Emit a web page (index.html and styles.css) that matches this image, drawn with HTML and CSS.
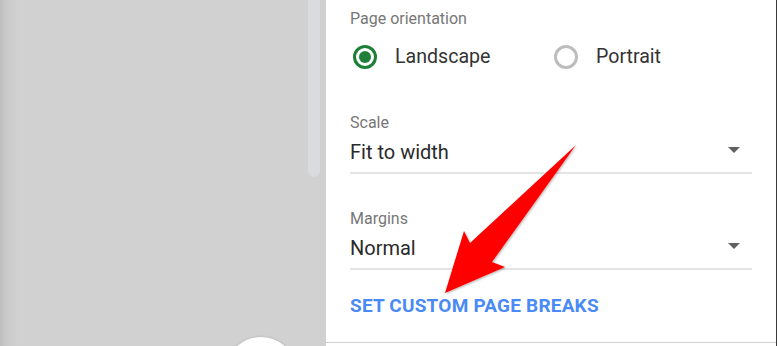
FILE: index.html
```html
<!DOCTYPE html>
<html>
<head>
<meta charset="utf-8">
<link rel="stylesheet" href="styles.css">
</head>
<body>
<div class="screen">
  <div class="preview">
    <div class="scroll-thumb"></div>
    <div class="bubble"></div>
  </div>
  <div class="panel">
    <div class="settings">
      <div class="label">Page orientation</div>
      <div class="radios">
        <div class="radio"><span class="ring checked"><span class="dot"></span></span><span>Landscape</span></div>
        <div class="radio"><span class="ring"></span><span>Portrait</span></div>
      </div>
      <div class="field scale">
        <div class="label">Scale</div>
        <div class="select"><span>Fit to width</span><span class="caret"></span></div>
      </div>
      <div class="field margins">
        <div class="label">Margins</div>
        <div class="select"><span>Normal</span><span class="caret"></span></div>
      </div>
      <div class="link">SET CUSTOM PAGE BREAKS</div>
    </div>
  </div>
  <svg class="arrow" width="777" height="346" viewBox="0 0 777 346">
    <defs>
      <filter id="sh" x="-10%" y="-10%" width="130%" height="130%">
        <feDropShadow dx="1" dy="1" stdDeviation="1" flood-color="#000" flood-opacity="0.3"/>
      </filter>
    </defs>
    <polygon points="576,145 470,243 464,231 445,293 505,267 492,262" fill="#ff0000" filter="url(#sh)"/>
  </svg>
</div>
</body>
</html>
```

FILE: styles.css
```css
html, body {
  margin: 0;
  padding: 0;
  background: #ffffff;
}

.screen {
  position: relative;
  width: 777px;
  height: 346px;
  display: flex;
  overflow: hidden;
  font-family: Roboto, "Noto Sans", sans-serif;
}

.preview {
  position: relative;
  width: 326px;
  flex: none;
  display: flex;
  justify-content: flex-end;
  align-items: flex-start;
  padding-right: 6px;
  box-sizing: border-box;
  background: linear-gradient(to right, #bdbdbd 0px, #c9c9c9 6px, #d0d0d0 16px, #d1d1d1 22px);
  overflow: hidden;
}

.scroll-thumb {
  width: 12px;
  height: 177px;
  background: #dadbdf;
  border-radius: 0 0 6px 6px;
}

.bubble {
  position: absolute;
  left: 225px;
  top: 337px;
  width: 72px;
  height: 72px;
  border-radius: 50%;
  background: #ffffff;
  box-shadow: 0 0 3px rgba(0, 0, 0, 0.15);
}

.panel {
  flex: 1;
  display: flex;
  flex-direction: column;
  background: #ffffff;
  border-right: 1px solid #3a3a3a;
}

.settings {
  height: 343px;
  box-sizing: border-box;
  padding: 9px 24px 0 24px;
  border-bottom: 1px solid #cfcfcf;
}

.label {
  font-size: 16px;
  line-height: 20px;
  color: #777777;
}

.radios {
  display: grid;
  grid-template-columns: 201px auto;
  margin: 16px 0 0 3px;
  height: 24px;
}

.radio {
  display: flex;
  align-items: center;
  gap: 18px;
  font-size: 19.6px;
  line-height: 24px;
  color: #333333;
}

.ring {
  width: 24px;
  height: 24px;
  box-sizing: border-box;
  border: 3px solid #bdbdbd;
  border-radius: 50%;
  display: flex;
  align-items: center;
  justify-content: center;
}

.ring.checked {
  border-color: #1e8038;
}

.dot {
  width: 12px;
  height: 12px;
  border-radius: 50%;
  background: #1e8038;
}

.field.scale {
  margin-top: 44px;
}

.field.margins {
  margin-top: 35px;
}

.select {
  margin-top: 7px;
  display: flex;
  justify-content: space-between;
  align-items: flex-start;
  font-size: 20px;
  line-height: 24px;
  color: #2a2a2a;
  padding-bottom: 8px;
  border-bottom: 2px solid #e4e4e4;
}

.caret {
  width: 0;
  height: 0;
  margin: 7px 12px 0 0;
  border-left: 6px solid transparent;
  border-right: 6px solid transparent;
  border-top: 6px solid #616161;
}

.link {
  margin-top: 25px;
  font-size: 19px;
  line-height: 22px;
  font-weight: 700;
  letter-spacing: 0.2px;
  color: #4a8af4;
}

.arrow {
  position: absolute;
  left: 0;
  top: 0;
  pointer-events: none;
}
```
